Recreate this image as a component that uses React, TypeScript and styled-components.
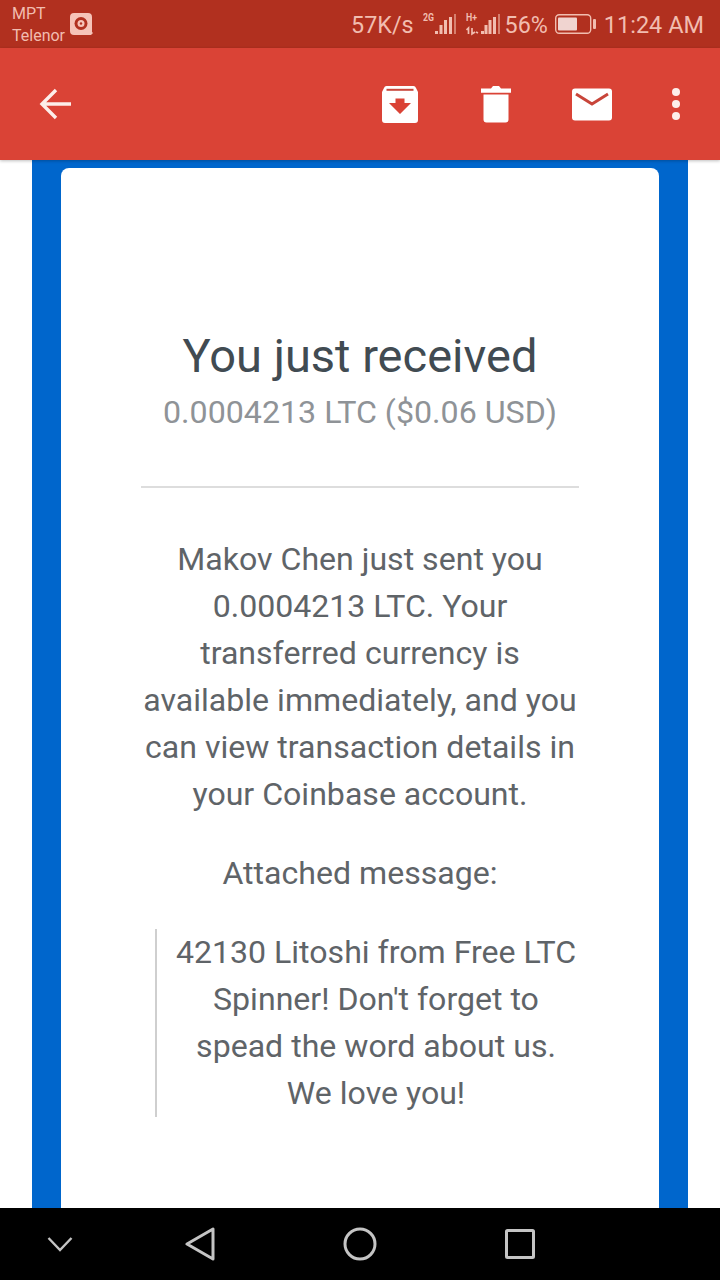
import React from "react";
import styled, { createGlobalStyle } from "styled-components";

const Global = createGlobalStyle`
  html, body { margin: 0; padding: 0; background: #fff; }
  body { font-family: Roboto, "Liberation Sans", sans-serif; }
`;

const Screen = styled.div`
  width: 720px;
  height: 1280px;
  display: flex;
  flex-direction: column;
  overflow: hidden;
  background: #fff;
`;

const StatusBar = styled.div`
  height: 48px;
  flex: none;
  background: #b1301f;
  color: #f1bdb0;
  display: flex;
  align-items: center;
  padding: 0 16px 0 12px;
`;

const Carrier = styled.div`
  font-size: 16px;
  line-height: 22px;
  width: 57px;
  margin-top: 2px;
`;

const StatusRight = styled.div`
  margin-left: auto;
  display: flex;
  align-items: center;
`;

const StatusText = styled.span<{ $size: number; $gap: number }>`
  font-size: ${(p) => p.$size}px;
  line-height: 48px;
  margin-left: ${(p) => p.$gap}px;
  white-space: nowrap;
  position: relative;
  top: 1px;
`;

const StatusIcon = styled.svg<{ $gap: number }>`
  display: block;
  margin-left: ${(p) => p.$gap}px;
  flex: none;
`;

const Toolbar = styled.div`
  height: 112px;
  flex: none;
  background: #da4336;
  display: flex;
  align-items: center;
  box-shadow: 0 1px 3px rgba(0, 0, 0, 0.25);
  position: relative;
  z-index: 1;
`;

const ToolSlot = styled.div<{ $w: number; $ml?: number }>`
  width: ${(p) => p.$w}px;
  margin-left: ${(p) => p.$ml ?? 0}px;
  display: flex;
  justify-content: center;
  flex: none;
`;

const Content = styled.div`
  flex: 1;
  min-height: 0;
  padding: 0 32px;
  overflow: hidden;
`;

const BlueBand = styled.div`
  height: 100%;
  background: #0066cc;
  padding: 8px 29px 0;
  box-sizing: border-box;
`;

const Card = styled.div`
  height: 100%;
  background: #fff;
  border-radius: 8px 8px 0 0;
  padding: 159px 80px 0;
  box-sizing: border-box;
  text-align: center;
`;

const Title = styled.h1`
  margin: 0;
  font-weight: 400;
  font-size: 47px;
  line-height: 58px;
  color: #414b52;
  white-space: nowrap;
`;

const Sub = styled.p`
  margin: 7px -10px 0;
  font-size: 32.2px;
  line-height: 40px;
  color: #8f9397;
  white-space: nowrap;
`;

const Rule = styled.hr`
  border: 0;
  height: 2px;
  background: #dddddd;
  margin: 54px 0 0;
`;

const Para = styled.p<{ $mt: number }>`
  margin: ${(p) => p.$mt}px -10px 0;
  font-size: 32.1px;
  line-height: 47px;
  color: #5f6468;
`;

const Line = styled.span`
  display: block;
  white-space: nowrap;
`;

const Quote = styled.blockquote`
  margin: 32px 0 0 14px;
  padding: 0 0 0 16px;
  border-left: 2px solid #cfcfcf;
  height: 188px;
  font-size: 32.1px;
  line-height: 47px;
  color: #5f6468;
`;

const NavBar = styled.div`
  height: 72px;
  flex: none;
  background: #000;
  display: flex;
  align-items: center;
`;

const NavSlot = styled.div<{ $w: number }>`
  width: ${(p) => p.$w}px;
  flex: none;
  display: flex;
  justify-content: center;
`;

const ink = "#f1bdb0";
const faint = "#d6806f";

export default function App() {
  return (
    <Screen>
      <Global />
      <StatusBar>
        <Carrier>
          MPT
          <br />
          Telenor
        </Carrier>
        <svg width="24" height="24" viewBox="0 0 24 24">
          <path d="M5 1h14a4 4 0 0 1 4 4v15l1 1-2 2H5a4 4 0 0 1-4-4V5a4 4 0 0 1 4-4z" fill="#f6c3b8" />
          <circle cx="12" cy="11.5" r="6.5" fill="#b1301f" />
          <circle cx="12" cy="11.5" r="3.5" fill="#f6c3b8" />
          <circle cx="12" cy="11.5" r="1.2" fill="#b1301f" />
        </svg>
        <StatusRight>
          <StatusText $size={23.3} $gap={0}>57K/s</StatusText>
          <StatusIcon $gap={9} width="34" height="24" viewBox="0 0 34 24">
            <text x="0" y="9" fontSize="11" fontWeight="700" fill={ink} fontFamily="Roboto" textLength="11" lengthAdjust="spacingAndGlyphs">2G</text>
            <rect x="12" y="19" width="3" height="3" fill={ink} />
            <rect x="16.500" y="13" width="3" height="9" fill={ink} />
            <rect x="21" y="8" width="3" height="14" fill={ink} />
            <rect x="26" y="5" width="3" height="17" fill={ink} />
            <rect x="31" y="2" width="2" height="20" fill={faint} />
          </StatusIcon>
          <StatusIcon $gap={9} width="36" height="24" viewBox="0 0 36 24">
            <text x="0" y="9" fontSize="11" fontWeight="700" fill={ink} fontFamily="Roboto" textLength="11" lengthAdjust="spacingAndGlyphs">H+</text>
            <path d="M2.500 22v-6L.5 18M6 16v6l3-2M10 20l2 1" stroke={ink} strokeWidth="1.7" fill="none" />
            <rect x="15" y="19" width="3" height="3" fill={ink} />
            <rect x="18.500" y="13" width="3" height="9" fill={ink} />
            <rect x="22.500" y="8" width="3" height="14" fill={ink} />
            <rect x="27" y="5" width="3" height="17" fill={ink} />
            <rect x="32" y="2" width="2" height="20" fill={faint} />
          </StatusIcon>
          <StatusText $size={23.3} $gap={3}>56%</StatusText>
          <StatusIcon $gap={7} width="41" height="20" viewBox="0 0 41 20">
            <rect x="0.700" y="0.700" width="35" height="18.500" rx="3.500" fill="none" stroke={ink} strokeWidth="1.4" />
            <rect x="3" y="3.500" width="19" height="13" rx="1" fill="#f0d4d0" />
            <rect x="38" y="5" width="3" height="10" rx="1" fill={ink} />
          </StatusIcon>
          <StatusText $size={23.5} $gap={8}>11:24 AM</StatusText>
        </StatusRight>
      </StatusBar>
      <Toolbar>
        <ToolSlot $w={110}>
          <svg width="32" height="32" viewBox="0 0 32 32" fill="none" stroke="#fdeeea" strokeWidth="3.400">
            <path d="M32 16H3M17 2 3 16l14 14" />
          </svg>
        </ToolSlot>
        <ToolSlot $w={38} $ml={271}>
          <svg width="36" height="37" viewBox="0 0 36 37">
            <path d="M5 0h26a3 3 0 0 1 3 2l2 4v28a3 3 0 0 1-3 3H3a3 3 0 0 1-3-3V6l2-4a3 3 0 0 1 3-2z" fill="#fff" />
            <path d="M4.500 3.800h27" stroke="#c9483c" strokeWidth="2" />
            <path d="M7 17h6.500v-4.500h9V17H29L18 28z" fill="#da4336" />
          </svg>
        </ToolSlot>
        <ToolSlot $w={30} $ml={62}>
          <svg width="30" height="37" viewBox="0 0 30 37">
            <path d="M0 2.500h10L12 0h6l2 2.500h10v4.200H0zM2.500 8.500h25V33.500a3 3 0 0 1-3 3H5.500a3 3 0 0 1-3-3z" fill="#fff" />
          </svg>
        </ToolSlot>
        <ToolSlot $w={42} $ml={60}>
          <svg width="42" height="33" viewBox="0 0 42 33">
            <rect x="1" y="0.500" width="40" height="32" rx="3" fill="#fff" />
            <path d="M5 6 21 16 37 6" fill="none" stroke="#c8453a" strokeWidth="3" />
          </svg>
        </ToolSlot>
        <ToolSlot $w={10} $ml={58}>
          <svg width="10" height="34" viewBox="0 0 10 34" fill="#fdeeea">
            <circle cx="5" cy="5" r="4" />
            <circle cx="5" cy="17" r="4" />
            <circle cx="5" cy="29" r="4" />
          </svg>
        </ToolSlot>
      </Toolbar>
      <Content>
        <BlueBand>
          <Card>
            <Title>You just received</Title>
            <Sub>0.0004213 LTC ($0.06 USD)</Sub>
            <Rule />
            <Para $mt={48}>
              <Line>Makov Chen just sent you</Line>
              <Line>0.0004213 LTC. Your</Line>
              <Line>transferred currency is</Line>
              <Line>available immediately, and you</Line>
              <Line>can view transaction details in</Line>
              <Line>your Coinbase account.</Line>
            </Para>
            <Para $mt={32}>Attached message:</Para>
            <Quote>
              <Line>42130 Litoshi from Free LTC</Line>
              <Line>Spinner! Don't forget to</Line>
              <Line>spead the word about us.</Line>
              <Line>We love you!</Line>
            </Quote>
          </Card>
        </BlueBand>
      </Content>
      <NavBar>
        <NavSlot $w={120}>
          <svg width="26" height="16" viewBox="0 0 26 16" fill="none" stroke="#c4c4c4" strokeWidth="2.400">
            <path d="M1.500 2 13 14 24.500 2" />
          </svg>
        </NavSlot>
        <NavSlot $w={160}>
          <svg width="30" height="34" viewBox="0 0 30 34" fill="none" stroke="#c4c4c4" strokeWidth="3" strokeLinejoin="round">
            <path d="M28 2v30L2 17z" />
          </svg>
        </NavSlot>
        <NavSlot $w={160}>
          <svg width="34" height="34" viewBox="0 0 34 34" fill="none" stroke="#c4c4c4" strokeWidth="3">
            <circle cx="17" cy="17" r="15" />
          </svg>
        </NavSlot>
        <NavSlot $w={160}>
          <svg width="30" height="30" viewBox="0 0 30 30" fill="none" stroke="#c4c4c4" strokeWidth="3" strokeLinejoin="round">
            <rect x="1.500" y="1.500" width="27" height="27" rx="1" />
          </svg>
        </NavSlot>
      </NavBar>
    </Screen>
  );
}
